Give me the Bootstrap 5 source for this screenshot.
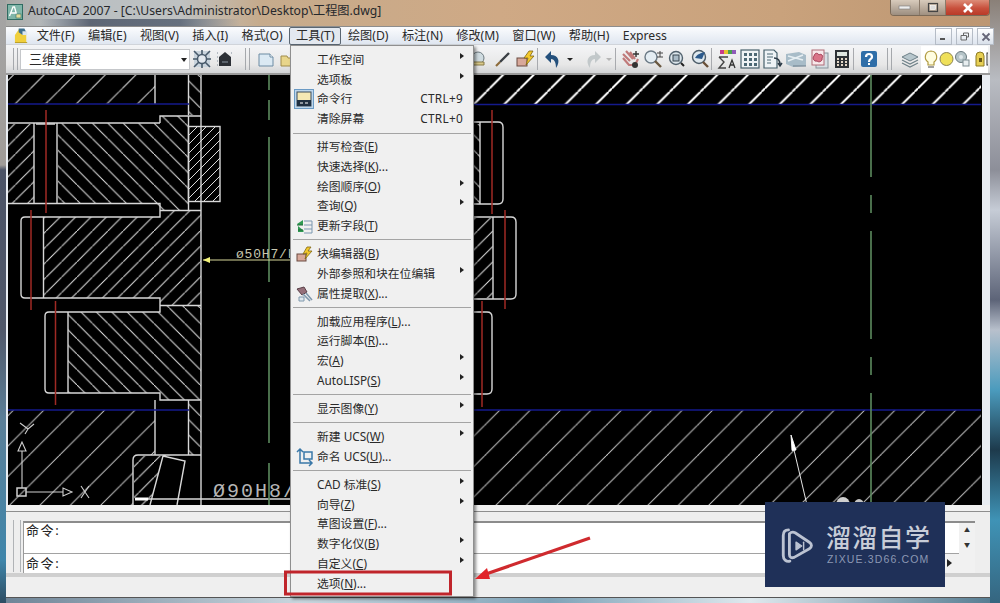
<!DOCTYPE html>
<html lang="zh-CN">
<head>
<meta charset="UTF-8" />
<meta name="viewport" content="width=device-width, initial-scale=1" />
<title>AutoCAD 2007</title>
<link href="https://cdn.jsdelivr.net/npm/bootstrap@5.3.0/dist/css/bootstrap.min.css" rel="stylesheet" />
<style>
html, body { margin: 0; background: #000; overflow: hidden; }
body, .dropdown-menu { font-family: "Noto Sans", "Noto Sans CJK SC", sans-serif; font-size: 12px; color: #2a2a2a; }
.desk {
  position: relative; width: 1000px; height: 603px; overflow: hidden;
  background:
    linear-gradient(90deg, rgba(90,100,115,0), #5d6675 25%, #66707e 70%, rgba(110,110,115,0)) 40px 19px / 200px 7px no-repeat,
    linear-gradient(180deg, #a5a5a5 0, #a09c98 165px, #4b5366 170px, #50586a 330px, #5b7f98 420px, #3f86ab 560px, #2d4c62 603px) left top / 6px 100% no-repeat,
    linear-gradient(180deg, #8a8078 0, #b9bcc2 80px, #8d8f99 170px, #c6ccd6 210px, #5d6478 300px, #b8c0cc 330px, #4b9bbd 390px, #1d3a4c 450px, #3f93b6 520px, #35657f 603px) right top / 10px 100% no-repeat,
    linear-gradient(90deg, #6d8396 0, #c9d6de 30%, #7fa3b8 55%, #dfe9ee 75%, #52798f 100%) left bottom / 100% 6px no-repeat,
    linear-gradient(90deg, #a9a8a4 0, #b8bec2 6%, #bfc2c2 18%, #c6ab8c 26%, #cfa985 50%, #c9a27c 78%, #bc9672 100%);
}
.title-row { height: 26px; padding-left: 7px; }
.title-row .app-ico { width: 16px; height: 16px; margin-right: 5px; }
.title-text { font-size: 12.2px; color: #26282c; white-space: nowrap; line-height: 22px; }
.win-btns { position: absolute; left: 890px; top: 0; width: 100px; height: 16px; border: 1px solid #7b6a58; border-top: 0; border-radius: 0 0 4px 4px; overflow: hidden; }
.win-btns span { display: flex; align-items: center; justify-content: center; height: 100%; }
.wb-min { width: 28px; background: linear-gradient(#d8cbbc, #9c8e80); }
.wb-max { width: 26px; background: linear-gradient(#d8cbbc, #a09080); border-left: 1px solid #8a7a6a; }
.wb-close { flex: 1; background: linear-gradient(#dd8d78 0, #c8503c 55%, #b93a28 100%); border-left: 1px solid #8a7a6a; }
.app-frame { width: 984px; height: 572px; margin-left: 6px; background: #e9edf2; border-top: 1px solid #8d8d8d; }
.menu-row { height: 18px; padding-left: 8px; background: linear-gradient(#fbfcfe, #dfe6f0); position: relative; border-bottom: 1px solid #d0d4da; }
.menu-row .doc-ico { width: 16px; height: 17px; flex: none; }
.menu-word { padding: 0 5.7px; line-height: 16px; white-space: nowrap; border: 1px solid transparent; font-size: 12.2px; }
.menu-word.is-open { background: #e3e8ef; border-color: #5a6672; border-radius: 2px; }
.mdi-btns { position: absolute; left: 929px; top: 1px; }
.mdi-btns span { width: 17px; height: 17px; background: linear-gradient(#fff, #d9e0ea); border: 1px solid #b5bcc6; display: flex; align-items: center; justify-content: center; }
.tool-row { height: 30px; background: linear-gradient(#f4f5f7, #e7e7e7 70%, #d2d4d6); border-bottom: 2px solid #9a9a9a; padding-left: 7px; }
.tool-slot { width: 23px; flex: none; display: flex; justify-content: center; align-items: center; }
.tool-slot.thin { width: 12px; }
.hidden-run { width: 168px; flex: none; }
.grip { width: 5px; height: 22px; border-left: 1px solid #a5a8ac; border-right: 1px solid #a5a8ac; flex: none; margin-left: 9px; margin-right: 4px; }
.grip.first { margin: 0; }
.grip.last { margin-left: 7px; margin-right: 6px; }
.tool-sep { width: 1px; height: 22px; background: #a8aaae; flex: none; margin-right: 3px; }
.combo-box { width: 170px; height: 21px; margin-left: 2px; background: #fff; border: 1px solid #c5c7ca; font-size: 13px; padding-left: 8px; line-height: 19px; position: relative; flex: none; }
.combo-box i { position: absolute; right: 2px; top: 8px; border: 3.5px solid transparent; border-top: 4px solid #222; border-bottom: 0; }
.tool-tail { background: #fff; height: 27px; flex: 1; padding-left: 2px; overflow: hidden; margin-right: 2px; }
.cad-view { display: block; width: 974px; height: 430px; margin-left: 2px; background: #000; }
.gap-strip { height: 7px; background: #f1f1f1; border-bottom: 1px solid #8e8e8e; }
.cmd-zone { height: 61px; background: #eeeeee; padding-left: 7px; }
.cmd-grip { width: 8px; height: 52px; margin-top: 8px; border-left: 1px solid #b0b3b6; border-right: 1px solid #b0b3b6; flex: none; }
.cmd-box { width: 952px; margin: 9px 0 0 2px; height: 52px; background: #fff; border-top: 2px solid #8c8c8c; border-left: 1px solid #9a9a9a; position: relative; font-size: 13px; letter-spacing: 1.6px; color: #222; }
.cmd-line { height: 31px; padding: 0 0 0 2px; line-height: 15px; border-bottom: 1px solid #a2a2a2; }
.cmd-line + .cmd-line { height: 19px; border-bottom: 0; line-height: 19px; }
.cmd-scroll { position: absolute; right: 0; top: 0; width: 16px; height: 31px; background: #f1f1f1; color: #333; font-size: 6px; line-height: 15px; text-align: center; letter-spacing: 0; }
.cmd-scroll2 { position: absolute; right: 0; top: 31px; width: 38px; height: 19px; background: #f1f1f1; }
.cmd-scroll2 i { position: absolute; left: 10px; top: 5px; border: 4px solid transparent; border-left: 5px solid #222; border-right: 0; }
.state-bar { height: 25px; background: #efefef; border-top: 4px solid #cfcfcf; border-bottom: 1px solid #555; }
.dropdown-menu.cad-menu {
  display: block; position: absolute; left: 290px; top: 45px; width: 184px; height: 552px; padding: 4px 2px 0; margin: 0;
  background: #f0f0f0; border: 1px solid #8f8f8f; border-radius: 0; box-shadow: 2px 2px 3px rgba(0,0,0,.45); min-width: 0; z-index: 5;
}
.cad-menu .dropdown-item { position: relative; height: 19.7px; line-height: 19.7px; padding: 0 0 0 24px; color: #2a2a2a; font-size: 11.8px; white-space: nowrap; background: none; display: flex; justify-content: space-between; }
.cad-menu .dropdown-divider { margin: 3.75px 0; height: 0; border-top: 1.5px solid #a4a4a4; opacity: 1; }
.cad-menu .keys { padding-right: 8px; letter-spacing: .3px; }
.cad-menu .more::after { content: ""; position: absolute; right: 7px; top: 3px; border: 3.5px solid transparent; border-left: 4.5px solid #222; border-right: 0; }
.cad-menu .row-ico { position: absolute; left: 1px; top: 0; width: 20px; height: 20px; }
.mark-layer { position: absolute; left: 0; top: 0; z-index: 6; pointer-events: none; }
.brand-tag { position: absolute; left: 765px; top: 502px; width: 180px; height: 85px; background: #1f3058; z-index: 7; }
.brand-tag svg { position: absolute; left: 14px; top: 25px; }
.brand-cn { position: absolute; left: 61px; top: 18px; font-size: 25px; line-height: 32px; letter-spacing: 1.3px; color: #c8cdd8; font-family: "Noto Sans CJK SC", sans-serif; font-weight: 500; white-space: nowrap; }
.brand-en { position: absolute; left: 62px; top: 50px; font-size: 10.5px; line-height: 14px; letter-spacing: 1.15px; color: #8c98b4; white-space: nowrap; font-family: "Liberation Sans", sans-serif; }
</style>
</head>
<body>
<div class="desk">

  <div class="title-row d-flex align-items-start">
    <svg class="app-ico mt-1" viewBox="0 0 16 16"><rect width="16" height="16" fill="#2f6b62"/><rect x="1" y="1" width="14" height="14" fill="#7fb5a8"/><path d="M2.500 12 6 3h1.500L10 12M4 9h5" fill="none" stroke="#fff" stroke-width="1.300"/><rect x="9" y="10" width="5" height="4" fill="#e5dc9a" stroke="#2f6b62" stroke-width=".6"/></svg>
    <span class="title-text">AutoCAD 2007 - [C:\Users\Administrator\Desktop\工程图.dwg]</span>
  </div>
  <div class="win-btns d-flex">
    <span class="wb-min"><svg width="14" height="6"><rect x="1" y="1" width="11" height="3" fill="#eee" stroke="#777" stroke-width=".6"/></svg></span>
    <span class="wb-max"><svg width="12" height="11"><rect x="1.500" y="1.500" width="9" height="8" fill="none" stroke="#444" stroke-width="1.200"/><rect x="3.500" y="3.500" width="5" height="4" fill="#ddd" stroke="#fff" stroke-width=".6"/></svg></span>
    <span class="wb-close"><svg width="12" height="10"><path d="m2 1 8 8m0-8-8 8" stroke="#fff" stroke-width="2.600"/></svg></span>
  </div>

  <div class="app-frame d-flex flex-column">
    <div class="menu-row d-flex align-items-center">
      <svg class="doc-ico" viewBox="0 0 17 17"><path d="M1 16V8l4-6h5l3 5v9z" fill="#f0cf3c"/><path d="M5 1h6l2 4-4 3-4-3z" fill="#3f6f8c"/><rect x="9" y="4" width="5" height="4" fill="#dbe6ef"/><path d="M1 16h13" stroke="#b79a1e"/></svg>
      <span class="menu-word">文件(F)</span>
      <span class="menu-word">编辑(E)</span>
      <span class="menu-word">视图(V)</span>
      <span class="menu-word">插入(I)</span>
      <span class="menu-word">格式(O)</span>
      <span class="menu-word is-open">工具(T)</span>
      <span class="menu-word">绘图(D)</span>
      <span class="menu-word">标注(N)</span>
      <span class="menu-word">修改(M)</span>
      <span class="menu-word">窗口(W)</span>
      <span class="menu-word">帮助(H)</span>
      <span class="menu-word">Express</span>
      <div class="mdi-btns d-flex gap-1">
        <span><svg width="9" height="9"><rect x="1" y="6" width="5" height="2" fill="#555"/></svg></span>
        <span><svg width="10" height="10"><path d="M3.500 3V1h5v4H6.500M1 3.500h5.500V8H1z" fill="none" stroke="#666"/></svg></span>
        <span><svg width="10" height="10"><path d="m1.500 1.500 7 7m0-7-7 7" stroke="#667" stroke-width="1.800"/></svg></span>
      </div>
    </div>

    <div class="tool-row d-flex align-items-center">
      <span class="grip first"></span>
      <div class="combo-box">三维建模<i></i></div>
      <span class="tool-slot"><svg width="20" height="20" viewBox="0 0 20 20"><rect x="2" y="2" width="16" height="16" fill="#c9d4dd"/><path d="M2 2l16 16M18 2 2 18M10 1v18M1 10h18" stroke="#47596a" stroke-width="1.600"/><circle cx="10" cy="10" r="4.500" fill="#e2e8ee" stroke="#47596a" stroke-width="1.500"/></svg></span>
      <span class="tool-slot"><svg width="20" height="20" viewBox="0 0 20 20"><path d="M4 8 10 3l6 5v9H4z" fill="#2c3036"/><path d="M2 4h2M2 8h2M2 12h2M2 16h2M16 4h2" stroke="#7d8a96" stroke-dasharray="1 1"/><path d="M7 13h6" stroke="#8a96a2"/></svg></span>
      <span class="grip"></span>
      <span class="tool-slot"><svg width="20" height="20" viewBox="0 0 20 20"><path d="M3 5h11l3 3v9H3z" fill="#dbe9f3" stroke="#6d8ba3"/><path d="M14 5v3h3" fill="#fff" stroke="#6d8ba3"/></svg></span>
      <span class="tool-slot"><svg width="20" height="20" viewBox="0 0 20 20"><path d="M2 7h6l1 2h8l-2 8H2z" fill="#e8d58a" stroke="#a08c4a"/></svg></span>
      <span class="hidden-run"></span>
      <span class="tool-slot"><svg width="20" height="20" viewBox="0 0 20 20"><circle cx="8" cy="9" r="6" fill="#cfdbe0" stroke="#6d7a80"/><path d="M3 13h11v3H3z" fill="#d9c98a" stroke="#887a46"/></svg></span>
      <span class="tool-slot"><svg width="20" height="20" viewBox="0 0 20 20"><path d="M7 13 16 4" stroke="#3a3f44" stroke-width="2.400"/><path d="M3 17l4-4" stroke="#8d6b3a" stroke-width="2.200"/></svg></span>
      <span class="tool-slot"><svg width="22" height="20" viewBox="0 0 22 20"><rect x="2" y="9" width="10" height="8" fill="#d8a89a" stroke="#6a4a40"/><path d="M9 9 14 2h4l-3 5h4l-8 9 2-7z" fill="#f4c92c" stroke="#7d6414" stroke-width=".8"/></svg></span>
      <span class="tool-sep"></span>
      <span class="tool-slot"><svg width="22" height="22" viewBox="0 0 22 22"><path d="M8 20C3 13 6 7 13 7V3l6 6-6 6v-4c-3 0-5 3-5 9z" fill="#24507c" transform="matrix(-1 0 0 1 22 0)"/></svg></span>
      <span class="tool-slot thin"><svg width="8" height="8" viewBox="0 0 8 8"><path d="M1 3h6L4 6z" fill="#222"/></svg></span>
      <span class="tool-slot ms-1"><svg width="20" height="22" viewBox="0 0 20 22"><path d="M12 20C17 13 14 7 7 7V3L1 9l6 6v-4c3 0 5 3 5 9z" fill="#c2c8ca" transform="matrix(-1 0 0 1 20 0)"/></svg></span>
      <span class="tool-slot thin"><svg width="8" height="8" viewBox="0 0 8 8"><path d="M1 3h6L4 6z" fill="#b5b5b5"/></svg></span>
      <span class="tool-sep"></span>
      <span class="tool-slot"><svg width="22" height="22" viewBox="0 0 22 22"><path d="M3 6l7 7M6 3l7 8M10 4l5 7M3 10l6 7h6l3-6" stroke="#c07a7a" stroke-width="2.200" fill="none"/><path d="M16 3v6M13 6h6" stroke="#333" stroke-width="1.400"/><circle cx="15" cy="17" r="3" fill="#333"/></svg></span>
      <span class="tool-slot"><svg width="22" height="22" viewBox="0 0 22 22"><circle cx="8" cy="9" r="6" fill="#e4edf3" stroke="#6b7a86" stroke-width="1.400"/><path d="m12 13 6 6" stroke="#6a5840" stroke-width="2.400"/><path d="M17 3v6M14 5h6M14 9h6" stroke="#444"/></svg></span>
      <span class="tool-slot"><svg width="22" height="22" viewBox="0 0 22 22"><circle cx="10" cy="10" r="6.500" fill="#dce6ec" stroke="#52626e" stroke-width="1.400"/><rect x="7" y="7" width="6" height="6" fill="#a9bac6" stroke="#36444e"/><path d="m15 15 3 3" stroke="#222" stroke-width="2"/></svg></span>
      <span class="tool-slot"><svg width="22" height="22" viewBox="0 0 22 22"><circle cx="10" cy="9" r="6.500" fill="#dfe8ee" stroke="#4c5c68" stroke-width="1.400"/><path d="M6 10c2-4 6-5 10-6l-3 7z" fill="#2c5a8c"/><path d="m14 14 5 5" stroke="#6a5038" stroke-width="2.400"/></svg></span>
      <span class="tool-sep"></span>
      <span class="tool-slot"><svg width="22" height="22" viewBox="0 0 22 22"><rect x="4" y="2" width="4" height="4" fill="#c83c8c"/><rect x="8" y="2" width="4" height="4" fill="#e8c430"/><rect x="12" y="2" width="4" height="4" fill="#4aa050"/><rect x="16" y="2" width="4" height="4" fill="#8f5bb8"/><path d="M3 9h9M3 9l5 5-5 6h7" fill="none" stroke="#444" stroke-width="1.400"/><path d="m13 20 3-8 3 8M14 17h4" fill="none" stroke="#333" stroke-width="1.300"/></svg></span>
      <span class="tool-slot"><svg width="22" height="22" viewBox="0 0 22 22"><rect x="2" y="2" width="18" height="18" fill="#eef3f5" stroke="#46606c" stroke-width="1.200"/><path d="M5 5h3v3H5zM10 5h3v3h-3zM15 5h3v3h-3zM5 10h3v3H5zM10 10h3v3h-3zM15 10h3v3h-3zM5 15h3v3H5zM10 15h3v3h-3zM15 15h3v3h-3z" fill="#4c6874"/></svg></span>
      <span class="tool-slot"><svg width="22" height="22" viewBox="0 0 22 22"><path d="M2 2h10l3 3v15H2z" fill="#eef3f6" stroke="#46606c" stroke-width="1.200"/><path d="M5 6h6M5 9h6M5 12h4M5 15h4" stroke="#4c6874"/><path d="M12 10c4 0 6 3 6 7m-2-2 2 3 2-3" fill="none" stroke="#2d3c48" stroke-width="1.500"/></svg></span>
      <span class="tool-slot"><svg width="22" height="22" viewBox="0 0 22 22"><path d="M1 6 14 4l7 3v11l-13 1-7-3z" fill="#a8bcc8"/><path d="M3 8l15 4M3 13l15-6" stroke="#e6eef2" stroke-width="1.600"/><path d="M8 18h13" stroke="#6d7f8c"/></svg></span>
      <span class="tool-slot"><svg width="22" height="22" viewBox="0 0 22 22"><rect x="8" y="5" width="12" height="15" fill="#d7dfe4" stroke="#88939c"/><rect x="4" y="2" width="12" height="15" fill="#f7e8ea" stroke="#b06c78"/><path d="M6 8c1-4 4-3 5-1 2-2 5 1 3 3 1 3-3 5-5 3-3 1-5-3-3-5z" fill="#d97488" stroke="#a03c54"/></svg></span>
      <span class="tool-slot"><svg width="20" height="22" viewBox="0 0 20 22"><rect x="3" y="2" width="14" height="18" fill="#2e3236"/><rect x="5" y="4" width="10" height="4" fill="#dfe6e0"/><path d="M5 10h2v2H5zM9 10h2v2H9zM13 10h2v2h-2zM5 13h2v2H5zM9 13h2v2H9zM13 13h2v2h-2zM5 16h2v2H5zM9 16h2v2H9zM13 16h2v2h-2z" fill="#e4d8c8"/></svg></span>
      <span class="tool-sep"></span>
      <span class="tool-slot"><svg width="20" height="20" viewBox="0 0 20 20"><rect x="2" y="2" width="16" height="16" rx="2" fill="#2f6ea8"/><path d="M7 8c0-4 6-4 6 0 0 2-3 2-3 5" fill="none" stroke="#fff" stroke-width="2.200"/><rect x="9" y="14" width="2" height="2" fill="#fff"/></svg></span>
      <span class="grip last"></span>
      <span class="tool-slot"><svg width="20" height="20" viewBox="0 0 20 20"><path d="M2 8l8-4 8 4-8 4z" fill="#b7c6cc" stroke="#6e8088"/><path d="M2 11l8 4 8-4M2 14l8 4 8-4" fill="none" stroke="#6e8088" stroke-width="1.200"/></svg></span>
      <div class="tool-tail d-flex align-items-center">
        <svg width="16" height="20" viewBox="0 0 16 20" class="flex-shrink-0"><path d="M8 2a6 6 0 0 0-3 11v3h6v-3A6 6 0 0 0 8 2z" fill="#fffde0" stroke="#b09a3e" stroke-width="1.200"/><path d="M5 18h6" stroke="#777" stroke-width="1.400"/></svg>
        <svg width="15" height="16" viewBox="0 0 15 16" class="flex-shrink-0"><circle cx="7.500" cy="8" r="6.500" fill="#efe05a" stroke="#8c8450"/></svg>
        <svg width="16" height="18" viewBox="0 0 16 18" class="flex-shrink-0"><circle cx="7" cy="7" r="5.500" fill="#b5c4c8" stroke="#6a7a80"/><circle cx="7" cy="7" r="2" fill="#dfe7ea"/><rect x="9" y="10" width="6" height="6" fill="#e8eef0" stroke="#7a8a90"/></svg>
        <svg width="12" height="18" viewBox="0 0 12 18" class="ms-1 flex-shrink-0"><path d="M2 16V6a4 4 0 0 1 8 0v10z" fill="#e7cf54" stroke="#8c7a22"/><rect x="5" y="8" width="3" height="4" fill="#6a5a18"/></svg>
        <svg width="6" height="18" viewBox="0 0 6 18" class="flex-shrink-0"><rect x="1" y="3" width="5" height="12" fill="#fff" stroke="#333"/></svg>
      </div>
    </div>

    <svg class="cad-view" viewBox="8 75 974 430" aria-label="drawing">
      <defs>
        <pattern id="topHatch" width="30.600" height="30.600" patternUnits="userSpaceOnUse"><path d="M27.200 0 0 27.200M30.600 27.200 27.200 30.600" stroke="#d8d8d8" stroke-width="1"/></pattern>
        <pattern id="topHatchBold" width="30.600" height="30.600" patternUnits="userSpaceOnUse"><path d="M27.200 0 0 27.200M30.600 27.200 27.200 30.600" stroke="#fff" stroke-width="2"/></pattern>
        <pattern id="lowHatch" width="30.400" height="30.400" patternUnits="userSpaceOnUse"><path d="M28.400 0 0 28.400M30.400 28.400 28.400 30.400" stroke="#d5d5d5" stroke-width="1"/></pattern>
        <pattern id="upHatch" width="15.400" height="15.400" patternUnits="userSpaceOnUse"><path d="M15.400 0 0 15.400" stroke="#e2e2e2" stroke-width="1"/></pattern>
        <pattern id="downHatch" width="15.400" height="15.400" patternUnits="userSpaceOnUse"><path d="M0 0 15.400 15.400" stroke="#e2e2e2" stroke-width="1"/></pattern>
        <pattern id="keyHatch" width="9" height="9" patternUnits="userSpaceOnUse"><path d="M9 0 0 9" stroke="#dcdcdc" stroke-width="1"/></pattern>
      </defs>
      <!-- hatch fills -->
      <rect x="8" y="75" width="147" height="29" fill="url(#topHatch)"/>
      <rect x="473" y="75" width="508" height="29" fill="url(#topHatchBold)"/>
      <rect x="189" y="75" width="12" height="40" fill="url(#downHatch)"/>
      <rect x="8" y="124" width="26" height="79" fill="url(#upHatch)"/>
      <path d="M58 123h102v-7h28v94h-30l-6-7H58z" fill="url(#downHatch)"/>
      <rect x="188.500" y="126.500" width="31.500" height="75" fill="url(#keyHatch)"/>
      <path d="M43 217h117v-7h41v95h-41v-7H43z" fill="url(#upHatch)"/>
      <path d="M68 312h92v-6.500h41V400h-41v-7H68z" fill="url(#downHatch)"/>
      <path d="M8 410h147v45h-18l-4 4v46H8z" fill="url(#lowHatch)"/>
      <path d="M134 460l3-4h26l-13 49h-16z" fill="url(#upHatch)"/>
      <rect x="189" y="402" width="12" height="53" fill="url(#downHatch)"/>
      <rect x="473" y="410" width="508" height="95" fill="url(#lowHatch)"/>
      <rect x="473" y="124" width="7" height="79" fill="url(#downHatch)"/>
      <rect x="473" y="218" width="20" height="80" fill="url(#upHatch)"/>
      <!-- outlines -->
      <g fill="none" stroke="#d8d8d8" stroke-width="1.400">
        <path d="M155 75v29M188.500 75v40M201 75v430M160 123H8M160 123v-7h41M188.500 116v94"/>
        <path d="M34 123v80M57 123v80M36 124h19M8 203.500h152v13.500H25q-4 0-4 4v73q0 4 4 4h135v14H49q-4 0-4 4v73q0 4 4 4h111v7h41M160 210.500h41M160 305.500h41M43.500 217v81M68 312v81"/>
        <rect x="188.500" y="126.500" width="31.500" height="75"/>
        <path d="M155 400v55M188.500 400v55M133 505v-45q0-5 5-5h63M135 499h155M163 456l-13 49M163 456l22 5-8 44"/>
        <path d="M473 122h25q5 0 5 5v72q0 5-5 5h-25M480 122v82M473 217h38q5 0 5 5v72q0 5-5 5h-38M493 217v82M473 312h14q5 0 5 5v72q0 5-5 5h-14"/>
      </g>
      <path d="M135 499h13" stroke="#fff" stroke-width="3"/>
      <!-- blue, red, green layers -->
      <g stroke="#141a8c" stroke-width="1.600"><path d="M8 104h181M473 104.500h508M8 410h181M473 410h508"/></g>
      <g stroke="#a02a24" stroke-width="1.500"><path d="M46 110v103M31 210v100M55.500 301v104M492 110v104M505 210v99M482 301v106"/></g>
      <g stroke="#5c8a5e" stroke-width="1.600"><path d="M269 75v15M269 100v20M269 137v145M269 298v145M269 463v42M871 75v102M871 195v18M871 231v108M871 357v18M871 393v112"/></g>
      <!-- dimension and UCS -->
      <path d="M203 260h87" stroke="#d8d89a" stroke-width="1.200"/><path d="M203 260l7-3v6z" fill="#f2f27a"/>
      <text x="236" y="258" font-family="Liberation Mono, monospace" font-size="13" letter-spacing=".8" fill="#c8c8b0">ø50H7/k</text>
      <text x="213" y="497" font-family="Liberation Mono, monospace" font-size="20" letter-spacing="2" fill="#b5b5b5">Ø90H8/</text>
      <g fill="none" stroke="#cfcfcf" stroke-width="1.100">
        <rect x="17" y="488" width="9" height="8" stroke-width="1.500"/><path d="M22 488v-37M26 492h37"/><path d="M22 442l-4 9h8zM72 492l-9-4v8z"/>
        <path d="M81 486l8 12m0-12-8 12M20 423l8 6 6-5m-6 5-3 5"/>
      </g>
      <path d="M791 435l5 15-4 .5zM794 450l13 55" fill="#fff" stroke="#fff" stroke-width=".9"/>
      <ellipse cx="843" cy="505" rx="7" ry="8" fill="#cfcfcf"/><ellipse cx="859" cy="505" rx="5" ry="6" fill="#c5c5c5"/>
    </svg>

    <div class="gap-strip"></div>
    <div class="cmd-zone d-flex">
      <span class="cmd-grip"></span>
      <div class="cmd-box">
        <div class="cmd-line">命令:</div>
        <div class="cmd-line">命令:</div>
        <div class="cmd-scroll">▲<br>▼</div>
        <div class="cmd-scroll2"><i></i></div>
      </div>
    </div>
    <div class="state-bar"></div>
  </div>

  <div class="dropdown-menu cad-menu show">
    <a class="dropdown-item more"><span>工作空间</span></a>
    <a class="dropdown-item more"><span>选项板</span></a>
    <a class="dropdown-item">
      <svg class="row-ico" viewBox="0 0 20 20"><rect x=".5" y=".5" width="19" height="19" fill="#bcd6ec" stroke="#6a9ac4"/><rect x="3" y="3" width="14" height="14" fill="#f5e8b4" stroke="#3d4a58"/><rect x="3" y="11" width="14" height="6" fill="#1f2f40"/><path d="M6 14h3M11 14h3" stroke="#fff"/></svg>
      <span>命令行</span><span class="keys">CTRL+9</span></a>
    <a class="dropdown-item"><span>清除屏幕</span><span class="keys">CTRL+0</span></a>
    <div class="dropdown-divider"></div>
    <a class="dropdown-item"><span>拼写检查(<u>E</u>)</span></a>
    <a class="dropdown-item"><span>快速选择(<u>K</u>)...</span></a>
    <a class="dropdown-item more"><span>绘图顺序(<u>O</u>)</span></a>
    <a class="dropdown-item more"><span>查询(<u>Q</u>)</span></a>
    <a class="dropdown-item">
      <svg class="row-ico" viewBox="0 0 20 20"><path d="M10 5h8M10 9h8M10 13h8M10 17h8M18 5v12" stroke="#7a98b0" fill="none"/><path d="M9 4 3 8l1 1h5z" fill="#2f9a52"/><path d="M4 10l6 5-1 1H4z" fill="#2f9a52"/><path d="M3 9h6M4 14h5" stroke="#1f6a38"/></svg>
      <span>更新字段(<u>T</u>)</span></a>
    <div class="dropdown-divider"></div>
    <a class="dropdown-item">
      <svg class="row-ico" viewBox="0 0 20 20"><rect x="3" y="10" width="9" height="7" fill="#d8a89a" stroke="#6a4a40"/><path d="M9 10 13 3h4l-3 4h4l-7 8 2-6z" fill="#f4c92c" stroke="#7d6414" stroke-width=".8"/></svg>
      <span>块编辑器(<u>B</u>)</span></a>
    <a class="dropdown-item more"><span>外部参照和块在位编辑</span></a>
    <a class="dropdown-item">
      <svg class="row-ico" viewBox="0 0 20 20"><path d="M3 5l7-2 3 5-5 3z" fill="#96707a" stroke="#5a4048"/><path d="M9 10l7 7M12 9l6 7" stroke="#7f98ac" stroke-width="1.600"/><path d="M5 13h5v4H5z" fill="#dfe8ee" stroke="#7f98ac"/></svg>
      <span>属性提取(<u>X</u>)...</span></a>
    <div class="dropdown-divider"></div>
    <a class="dropdown-item"><span>加载应用程序(<u>L</u>)...</span></a>
    <a class="dropdown-item"><span>运行脚本(<u>R</u>)...</span></a>
    <a class="dropdown-item more"><span>宏(<u>A</u>)</span></a>
    <a class="dropdown-item more"><span>AutoLISP(<u>S</u>)</span></a>
    <div class="dropdown-divider"></div>
    <a class="dropdown-item more"><span>显示图像(<u>Y</u>)</span></a>
    <div class="dropdown-divider"></div>
    <a class="dropdown-item more"><span>新建 UCS(<u>W</u>)</span></a>
    <a class="dropdown-item">
      <svg class="row-ico" viewBox="0 0 20 20"><path d="M6 2v14h12M3 5l3-3 3 3M15 13l3 3-3 3M10 5h8v7h-8z" fill="none" stroke="#3a78a8" stroke-width="1.500"/></svg>
      <span>命名 UCS(<u>U</u>)...</span></a>
    <div class="dropdown-divider"></div>
    <a class="dropdown-item more"><span>CAD 标准(<u>S</u>)</span></a>
    <a class="dropdown-item more"><span>向导(<u>Z</u>)</span></a>
    <a class="dropdown-item"><span>草图设置(<u>F</u>)...</span></a>
    <a class="dropdown-item more"><span>数字化仪(<u>B</u>)</span></a>
    <a class="dropdown-item more"><span>自定义(<u>C</u>)</span></a>
    <a class="dropdown-item"><span>选项(<u>N</u>)...</span></a>
  </div>

  <svg class="mark-layer" width="1000" height="603" viewBox="0 0 1000 603">
    <rect x="285.500" y="572" width="165" height="22" fill="none" stroke="#c0252b" stroke-width="3"/>
    <path d="M590 538 486 574" stroke="#cf2a2e" stroke-width="3.200" fill="none"/>
    <path d="M475 579l12-11 3 11z" fill="#e1242a"/>
  </svg>

  <div class="brand-tag">
    <svg width="36" height="38" viewBox="0 0 38 38" fill="none" stroke="#bcc3d2" stroke-width="3" stroke-linecap="round" stroke-linejoin="round">
      <path d="M10 2C6 2 4.500 5 4.500 8v21c0 4 3 7 7 6"/>
      <path d="M11 6v22c0 3 2 4 5 3l16-9c3-2 3-5 0-7L17 5c-2-1-4-1-6 1z"/>
      <path d="M18 15v8l6-4z" fill="#bcc3d2" stroke-width="1.500"/>
      <path d="M26 15v8" stroke-width="1.500"/>
    </svg>
    <div class="brand-cn">溜溜自学</div>
    <div class="brand-en">ZIXUE.3D66.COM</div>
  </div>
</div>
<script src="https://cdn.jsdelivr.net/npm/bootstrap@5.3.0/dist/js/bootstrap.bundle.min.js"></script>
</body>
</html>
